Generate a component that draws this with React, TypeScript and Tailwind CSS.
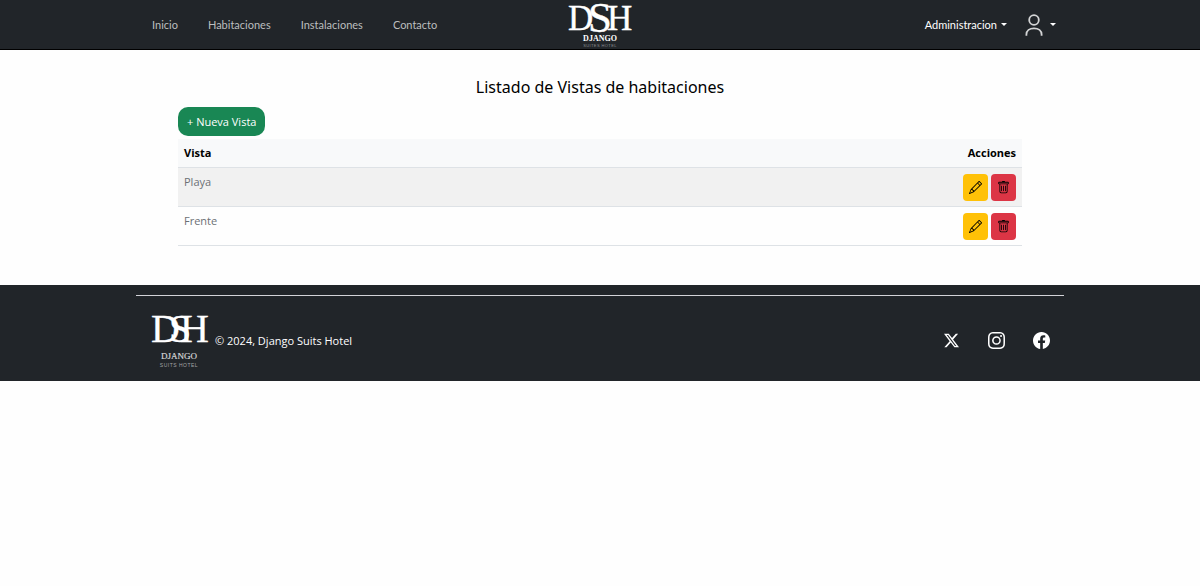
import type { ReactNode } from "react";
import { BsFacebook, BsInstagram, BsPencil, BsTrash, BsTwitterX } from "react-icons/bs";

const links = ["Inicio", "Habitaciones", "Instalaciones", "Contacto"];
const views = ["Playa", "Frente"];

function Caret() {
  return <span className="border-x-[3px] border-t-[3px] border-x-transparent border-t-current" />;
}

function PersonIcon() {
  return (
    <svg viewBox="0 0 18 22" className="h-[22px] w-[18px]" fill="none" stroke="#d3d4d5" strokeWidth="1.8" aria-hidden="true">
      <circle cx="9" cy="6" r="4.8" />
      <path d="M1.4 21.8v-1.3c0-3.9 3.2-6.2 7.6-6.2s7.6 2.3 7.6 6.2v1.3" />
    </svg>
  );
}

function HeaderLogo() {
  return (
    <svg viewBox="0 0 66 49" className="h-[49px] w-[66px] overflow-visible" fill="#fff" fontFamily="'Liberation Serif', serif" role="img" aria-label="DSH Django Suites Hotel">
      <text y="30" fontSize="35" stroke="#fff" strokeWidth="0.4">
        <tspan x="1">D</tspan>
        <tspan x="21" y="32" fontSize="43">S</tspan>
        <tspan x="40" y="30">H</tspan>
      </text>
      <text x="33" y="41" fontSize="8" fontWeight="bold" textAnchor="middle">DJANGO</text>
      <text x="33" y="47" fontSize="4" fill="#8b8e91" textAnchor="middle" fontFamily="'Liberation Sans', sans-serif" className="tracking-widest">SUITES HOTEL</text>
    </svg>
  );
}

function FooterLogo() {
  return (
    <svg viewBox="0 0 58 56" className="h-14 w-[58px] overflow-visible" fill="#fff" fontFamily="'Liberation Serif', serif" role="img" aria-label="DSH Django Suits Hotel">
      <text x="1 19 30" y="29" fontSize="40" stroke="#fff" strokeWidth="0.3">DSH</text>
      <text x="29" y="46" fontSize="9" fill="#d5d6d7" stroke="#d5d6d7" strokeWidth="0.2" textAnchor="middle">DJANGO</text>
      <text x="29" y="54" fontSize="5" fill="#a2a4a6" textAnchor="middle" fontFamily="'Liberation Sans', sans-serif" className="tracking-widest">SUITS HOTEL</text>
    </svg>
  );
}

function ActionButton({ label, className, children }: { label: string; className: string; children: ReactNode }) {
  return (
    <button type="button" aria-label={label} className={`flex h-[27px] w-[25px] items-center justify-center rounded text-[13px] text-black ${className}`}>
      {children}
    </button>
  );
}

export default function App() {
  return (
    <div className="min-h-screen bg-[#fefefe] font-['Open_Sans','Noto_Sans',sans-serif] text-[11px] leading-4 text-[#212529]">
      <header className="border-b border-black bg-[#212529] font-['Lato','Open_Sans',sans-serif]">
        <div className="mx-auto grid max-w-[928px] grid-cols-[1fr_auto_1fr] items-center px-2">
          <nav className="flex gap-[30px] pl-2 text-[#bcbebf]">
            {links.map((link) => (
              <a key={link} href="#">{link}</a>
            ))}
          </nav>
          <a href="#"><HeaderLogo /></a>
          <div className="flex items-center justify-end gap-[18px] text-white">
            <button type="button" className="flex items-center gap-1">Administracion <Caret /></button>
            <button type="button" aria-label="Cuenta" className="flex items-center gap-[7px]">
              <PersonIcon />
              <Caret />
            </button>
          </div>
        </div>
      </header>

      <main className="mx-auto max-w-[844px] pt-[25px] pb-[39px]">
        <h1 className="text-center font-['Noto_Sans','Open_Sans',sans-serif] text-[16px] leading-6 text-black">Listado de Vistas de habitaciones</h1>
        <button type="button" className="mt-2 h-[29px] rounded-[10px] bg-[#198754] px-[9px] text-white">+ Nueva Vista</button>
        <table className="mt-[3px] w-full border-collapse">
          <thead>
            <tr className="h-7 border-b border-[#dee2e6] bg-[#f8f9fa] text-black">
              <th className="px-1.5 text-left font-bold">Vista</th>
              <th className="px-1.5 text-right font-bold">Acciones</th>
            </tr>
          </thead>
          <tbody className="text-[#6c7075]">
            {views.map((view) => (
              <tr key={view} className="border-b border-[#dee2e6] odd:bg-[#f1f1f1]">
                <td className="px-1.5 py-1.5 align-top">{view}</td>
                <td className="px-1.5 pt-1.5 pb-[5px]">
                  <div className="flex justify-end gap-[3px]">
                    <ActionButton label={`Editar ${view}`} className="bg-[#ffc107]"><BsPencil /></ActionButton>
                    <ActionButton label={`Eliminar ${view}`} className="bg-[#dc3545]"><BsTrash /></ActionButton>
                  </div>
                </td>
              </tr>
            ))}
          </tbody>
        </table>
      </main>

      <footer className="bg-[#212529] pt-2.5 pb-3 text-white">
        <div className="mx-auto flex max-w-[928px] items-center justify-between border-t border-[#d3d3d8] px-3.5 pt-[17px]">
          <div className="flex items-center gap-[7px]">
            <FooterLogo />
            <p>© 2024, Django Suits Hotel</p>
          </div>
          <div className="flex gap-7 text-[17px]">
            <a href="#" aria-label="X"><BsTwitterX className="p-px" /></a>
            <a href="#" aria-label="Instagram"><BsInstagram /></a>
            <a href="#" aria-label="Facebook"><BsFacebook /></a>
          </div>
        </div>
      </footer>
    </div>
  );
}
